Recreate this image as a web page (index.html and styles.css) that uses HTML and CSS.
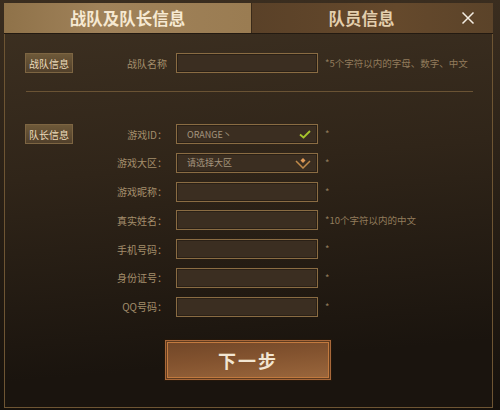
FILE: index.html
```html
<!DOCTYPE html>
<html lang="zh-CN">
<head>
    <meta charset="UTF-8">
    <meta name="viewport" content="width=device-width, initial-scale=1.0">
    <title>战队报名</title>
    <link rel="stylesheet" href="styles.css">
</head>
<body>
    <div class="dialog">
        <div class="frame">
            <div class="tabs">
                <div class="tab active">战队及队长信息</div>
                <div class="tab">队员信息</div>
                <button class="close" aria-label="关闭">
                    <svg width="14" height="14" viewBox="0 0 14 14"><path d="M1.5 1.5 L12.5 12.5 M12.5 1.5 L1.5 12.5" stroke="#f4ede2" stroke-width="1.5" fill="none"/></svg>
                </button>
            </div>
            <div class="body">
                <div class="section">
                    <div class="row">
                        <div class="tag">战队信息</div>
                        <label class="label">战队名称</label>
                        <div class="field"></div>
                        <span class="hint">*5个字符以内的字母、数字、中文</span>
                    </div>
                </div>
                <div class="divider"></div>
                <div class="section rows">
                    <div class="row">
                        <div class="tag">队长信息</div>
                        <label class="label">游戏ID：</label>
                        <div class="field">
                            <span class="value">ORANGE丶</span>
                            <svg class="icon" width="12" height="9" viewBox="0 0 12 9"><path d="M1 4.5 L4.5 7.5 L11 1" stroke="#a8c52c" stroke-width="1.8" fill="none"/></svg>
                        </div>
                        <span class="hint">*</span>
                    </div>
                    <div class="row">
                        <div class="tag-slot"></div>
                        <label class="label">游戏大区：</label>
                        <div class="field">
                            <span class="value">请选择大区</span>
                            <svg class="icon" width="16" height="12" viewBox="0 0 16 12"><path d="M1 4 L8 11 L15 4" stroke="#c08a4a" stroke-width="1.5" fill="none"/><path d="M8 1 L10.5 3.5 L8 6 L5.5 3.5 Z" fill="#e09a58"/></svg>
                        </div>
                        <span class="hint">*</span>
                    </div>
                    <div class="row">
                        <div class="tag-slot"></div>
                        <label class="label">游戏昵称：</label>
                        <div class="field"></div>
                        <span class="hint">*</span>
                    </div>
                    <div class="row">
                        <div class="tag-slot"></div>
                        <label class="label">真实姓名：</label>
                        <div class="field"></div>
                        <span class="hint">*10个字符以内的中文</span>
                    </div>
                    <div class="row">
                        <div class="tag-slot"></div>
                        <label class="label">手机号码：</label>
                        <div class="field"></div>
                        <span class="hint">*</span>
                    </div>
                    <div class="row">
                        <div class="tag-slot"></div>
                        <label class="label">身份证号：</label>
                        <div class="field"></div>
                        <span class="hint">*</span>
                    </div>
                    <div class="row">
                        <div class="tag-slot"></div>
                        <label class="label">QQ号码：</label>
                        <div class="field"></div>
                        <span class="hint">*</span>
                    </div>
                </div>
                <div class="actions">
                    <button class="next">下一步</button>
                </div>
            </div>
        </div>
    </div>
</body>
</html>
```
FILE: styles.css
```css
body {
    margin: 0;
    background: #15110c;
    font-family: "Noto Sans CJK SC", "Noto Sans", sans-serif;
}
.dialog {
    width: 500px;
    height: 410px;
    box-sizing: border-box;
    padding: 3px 7px 2px 4px;
    background: linear-gradient(#3a2d1f, #16110c);
}
.frame {
    height: 100%;
    box-sizing: border-box;
    border: 1px solid #6e5533;
    border-top: none;
    display: flex;
    flex-direction: column;
    background: linear-gradient(175deg, #3e3122 0%, #302519 40%, #1a140e 85%);
}
.tabs {
    display: flex;
    height: 30px;
    position: relative;
    border-bottom: 1px solid #231a11;
    margin: 0 -1px;
}
.tab {
    display: flex;
    align-items: center;
    justify-content: center;
    font-size: 16.5px;
    font-weight: 700;
    color: #e3cfae;
}
.tab.active {
    width: 247px;
    background: linear-gradient(90deg, #8f7249 0%, #a0825a 40%, #9a7c52 100%);
    color: #f6e9d2;
}
.tab:not(.active) {
    flex: 1;
    padding-right: 22px;
    background: linear-gradient(90deg, #5a4128 0%, #65492c 60%, #5b4329 100%);
    border-left: 1px solid #3a2a19;
}
.close {
    position: absolute;
    right: 18px;
    top: 8px;
    width: 14px;
    height: 14px;
    padding: 0;
    border: none;
    background: none;
}
.body {
    flex: 1;
    padding: 19px 19px 0 20px;
    display: flex;
    flex-direction: column;
}
.rows {
    display: flex;
    flex-direction: column;
    gap: 8.8px;
}
.row {
    display: flex;
    align-items: center;
    height: 20px;
}
.tag, .tag-slot {
    width: 48px;
    height: 20px;
    box-sizing: border-box;
    flex: none;
}
.tag {
    border: 1px solid #7d6542;
    background: linear-gradient(#6e5939, #51402b);
    color: #eddcbc;
    font-size: 10px;
    display: flex;
    align-items: center;
    justify-content: center;
}
.label {
    width: 94px;
    text-align: right;
    font-size: 10px;
    color: #a48e6c;
    margin-right: 9px;
    flex: none;
}
.field {
    width: 142px;
    height: 20px;
    box-sizing: border-box;
    border: 1px solid #8a6c43;
    background: #3b2e21;
    box-shadow: inset 0 0 0 1px #2a2016;
    display: flex;
    align-items: center;
    justify-content: space-between;
    padding: 0 6px 0 10px;
    flex: none;
}
.value {
    font-size: 9px;
    color: #a4957e;
}
.icon {
    flex: none;
}
.hint {
    margin-left: 7px;
    font-size: 9.5px;
    color: #927c5c;
}
.divider {
    height: 1px;
    background: #6a5334;
    margin: 18px 0 32px 1px;
}
.actions {
    display: flex;
    justify-content: center;
    margin-top: 22px;
    padding-right: 2px;
}
.next {
    width: 168px;
    height: 42px;
    border: 1px solid #24170b;
    outline: 1px solid #c27a3f;
    outline-offset: -4px;
    background: linear-gradient(175deg, #6f4527 0%, #83532f 45%, #9c683d 100%);
    box-shadow: inset 0 0 0 1px #a8683a, inset 0 0 0 3px #5e3a1e;
    color: #f2e6d3;
    font-family: "Noto Sans CJK SC", sans-serif;
    font-size: 18px;
    font-weight: 700;
    letter-spacing: 2px;
}
```
